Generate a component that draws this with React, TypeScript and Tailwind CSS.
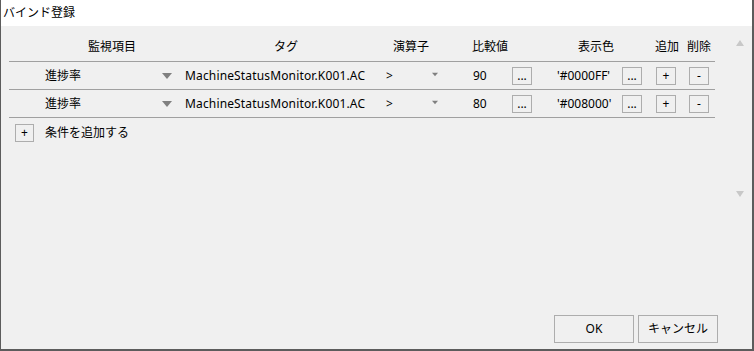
import React from "react";

type Row = {
    item: string;
    tag: string;
    op: string;
    value: string;
    color: string;
};

const rows: Row[] = [
    { item: "進捗率", tag: "MachineStatusMonitor.K001.AC", op: ">", value: "90", color: "'#0000FF'" },
    { item: "進捗率", tag: "MachineStatusMonitor.K001.AC", op: ">", value: "80", color: "'#008000'" },
];

const font = { fontFamily: '"Noto Sans", "Noto Sans CJK JP", sans-serif' };

function SmallButton({ label, w = "w-[20px]" }: { label: string; w?: string }) {
    return (
        <button className={`${w} h-[18px] border border-[#adadad] bg-[#f0f0f0] flex items-center justify-center text-[12px] leading-none text-black`}>
            {label}
        </button>
    );
}

function ArrowDown({ className }: { className: string }) {
    return (
        <svg viewBox="0 0 10 6" className={className}>
            <polygon points="0,0 10,0 5,6" fill="currentColor" />
        </svg>
    );
}

export default function App() {
    return (
        <div
            className="w-[754px] h-[351px] flex flex-col border-l border-r-2 border-b-2 border-[#5c5c5c] bg-[#f0f0f0] text-black text-[12px]"
            style={font}
        >
            {/* title */}
            <div className="h-[26px] bg-white flex items-center pl-[2px] pb-[1px] shrink-0">
                バインド登録
            </div>

            <div className="flex h-[176px]">
                <div className="flex-1 pl-[8px] pr-[14px]">
                    {/* header */}
                    <div className="h-[35px] flex items-center pt-[7px] whitespace-nowrap">
                        <div className="w-[79px]" />
                        <div className="w-[186px]">監視項目</div>
                        <div className="w-[119px]">タグ</div>
                        <div className="w-[79px]">演算子</div>
                        <div className="w-[106px]">比較値</div>
                        <div className="w-[77px]">表示色</div>
                        <div className="w-[32px]">追加</div>
                        <div>削除</div>
                    </div>

                    {rows.map((row, i) => (
                        <div
                            key={i}
                            className="h-[28px] flex items-center border-t border-[#a0a0a0] whitespace-nowrap"
                        >
                            <div className="w-[153px] pl-[36px]">{row.item}</div>
                            <ArrowDown className="w-[10px] h-[6px] text-[#808080] mt-[1px]" />
                            <div className="w-[13px]" />
                            <div className="w-[201px] tracking-[0.15px]">{row.tag}</div>
                            <div className="w-[46px]">{row.op}</div>
                            <ArrowDown className="w-[6px] h-[5px] text-[#808080] mb-[2px]" />
                            <div className="w-[35px]" />
                            <div className="w-[39px]">{row.value}</div>
                            <SmallButton label="..." />
                            <div className="w-[90px] pl-[25px]">{row.color}</div>
                            <SmallButton label="..." />
                            <div className="w-[14px]" />
                            <SmallButton label="+" />
                            <div className="w-[13px]" />
                            <SmallButton label="-" />
                        </div>
                    ))}

                    <div className="h-[30px] flex items-center border-t border-[#a0a0a0] gap-[11px] pl-[6px]">
                        <SmallButton label="+" w="w-[19px]" />
                        <span>条件を追加する</span>
                    </div>
                </div>

                {/* scrollbar */}
                <div className="w-[22px] flex flex-col items-center justify-between pt-[14px] pb-[5px] mr-[1px] text-[#c8c8c8]">
                    <svg viewBox="0 0 8 6" className="w-[8px] h-[6px]">
                        <polygon points="4,0 8,6 0,6" fill="currentColor" />
                    </svg>
                    <svg viewBox="0 0 8 6" className="w-[8px] h-[6px]">
                        <polygon points="0,0 8,0 4,6" fill="currentColor" />
                    </svg>
                </div>
            </div>

            <div className="flex-1 flex items-end justify-end gap-[4px] pr-[34px] pb-[6px]">
                <button className="w-[80px] h-[28px] border border-[#adadad] bg-[#f0f0f0]">OK</button>
                <button className="w-[80px] h-[28px] border border-[#adadad] bg-[#f0f0f0]">キャンセル</button>
            </div>
        </div>
    );
}
